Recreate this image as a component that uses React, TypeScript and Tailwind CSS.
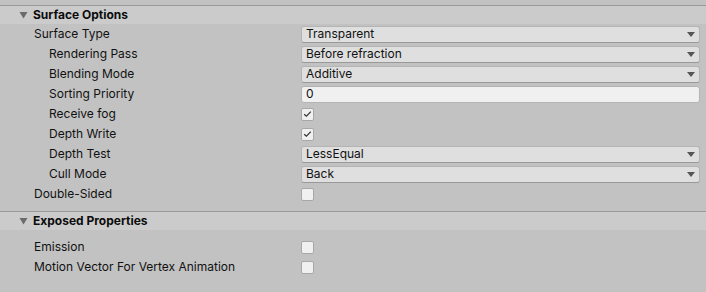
import React from "react";

const Triangle = () => (
  <svg width="9" height="8" viewBox="0 0 9 8" className="mr-[5px]">
    <path d="M0.5 1 L8.5 1 L4.5 7.5 Z" fill="#6b6b6b" />
  </svg>
);

const Header = ({ title }: { title: string }) => (
  <div className="h-[19px] border-t border-[#9a9a9a] bg-[#cbcbcb] flex items-center pl-[19px]">
    <Triangle />
    <span className="font-bold text-[12px] text-[#0c0c0c]">{title}</span>
  </div>
);

const Dropdown = ({ value }: { value: string }) => (
  <div className="h-[17px] w-full rounded-[3px] bg-[#dfdfdf] border border-[#b4b4b4] border-b-[#999999] flex items-center justify-between pl-[4px] pr-[4px]">
    <span className="leading-none">{value}</span>
    <svg width="8" height="5" viewBox="0 0 8 5">
      <path d="M0 0 L8 0 L4 5 Z" fill="#555555" />
    </svg>
  </div>
);

const TextField = ({ value }: { value: string }) => (
  <div className="h-[17px] w-full rounded-[3px] bg-[#f0f0f0] border border-[#b4b4b4] flex items-center pl-[4px]">
    <span className="leading-none">{value}</span>
  </div>
);

const Checkbox = ({ checked }: { checked?: boolean }) => (
  <div className="w-[13px] h-[13px] rounded-[2px] bg-[#f0f0f0] border border-[#a8a8a8] flex items-center justify-center">
    {checked && (
      <svg width="9" height="8" viewBox="0 0 9 8">
        <path d="M1.2 4.2 L3.4 6.2 L7.8 1.6" stroke="#333333" strokeWidth="1.2" fill="none" />
      </svg>
    )}
  </div>
);

const Row = ({
  label,
  indent,
  children,
}: {
  label: string;
  indent?: boolean;
  children: React.ReactNode;
}) => (
  <div className="h-[20px] flex items-center">
    <div className={`w-[301px] shrink-0 ${indent ? "pl-[49px]" : "pl-[34px]"}`}>{label}</div>
    <div className="flex-1 pr-[6px] flex items-center">{children}</div>
  </div>
);

export default function App() {
  return (
    <div
      className="w-[706px] h-[292px] bg-[#c2c2c2] pt-[5px] text-[12px] text-[#111111] overflow-hidden"
      style={{ fontFamily: "Inter, 'Noto Sans', sans-serif" }}
    >
      <Header title="Surface Options" />
      <div>
        <Row label="Surface Type">
          <Dropdown value="Transparent" />
        </Row>
        <Row label="Rendering Pass" indent>
          <Dropdown value="Before refraction" />
        </Row>
        <Row label="Blending Mode" indent>
          <Dropdown value="Additive" />
        </Row>
        <Row label="Sorting Priority" indent>
          <TextField value="0" />
        </Row>
        <Row label="Receive fog" indent>
          <Checkbox checked />
        </Row>
        <Row label="Depth Write" indent>
          <Checkbox checked />
        </Row>
        <Row label="Depth Test" indent>
          <Dropdown value="LessEqual" />
        </Row>
        <Row label="Cull Mode" indent>
          <Dropdown value="Back" />
        </Row>
        <Row label="Double-Sided">
          <Checkbox />
        </Row>
      </div>
      <div className="h-[7px]" />
      <Header title="Exposed Properties" />
      <div className="pt-[7px]">
        <Row label="Emission">
          <Checkbox />
        </Row>
        <Row label="Motion Vector For Vertex Animation">
          <Checkbox />
        </Row>
      </div>
    </div>
  );
}
